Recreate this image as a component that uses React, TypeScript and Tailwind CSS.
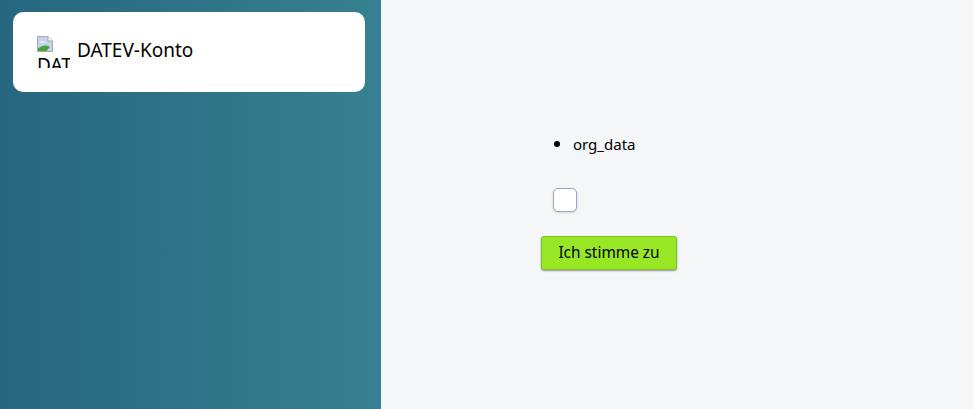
export default function App() {
  return (
    <div className="flex h-screen overflow-hidden bg-[#f5f6f8] text-black font-['Noto_Sans',sans-serif]">
      <aside className="w-[381px] shrink-0 bg-gradient-to-r from-[#27667f] to-[#368190] pl-[13px] pt-3">
        <div className="flex h-20 w-[352px] items-center rounded-[10px] bg-white pl-6">
          <div className="mr-[7px] h-8 w-[33px] overflow-hidden text-[19px] leading-[26px]">
            <svg width="16" height="16" viewBox="0 0 16 16" className="block">
              <path d="M.5.5H11L15.5 5V15.5H.5Z" fill="#c3d5ee" stroke="#a8a8a8" />
              <path d="M11 .5V5H15.5" fill="#fff" stroke="#a8a8a8" />
              <path d="M3 6.500C4 4.500 7 4.500 8 6.500H3Z" fill="#fff" />
              <path d="M1 15V12.500C5 9 10 8.500 13 11L9.500 15Z" fill="#4da33b" />
            </svg>
            <span className="block">DATEV</span>
          </div>
          <span className="mb-1 text-[19px] leading-6">DATEV-Konto</span>
        </div>
      </aside>
      <main className="pl-[160px] pt-[131px]">
        <ul className="list-disc pl-8 text-[18px] leading-6">
          <li>
            <span className="text-[15px]">org_data</span>
          </li>
        </ul>
        <input
          type="checkbox"
          className="mt-[32px] ml-3 block h-6 w-6 appearance-none rounded-[5px] border border-[#9ca3bd] bg-white shadow-sm"
        />
        <button className="mt-6 block h-[34px] w-[136px] rounded-[3px] border border-[#7fc02c] bg-[#97e724] text-[15.400px] shadow-[0_1px_2px_rgba(0,0,0,0.4)]">
          Ich stimme zu
        </button>
      </main>
    </div>
  )
}
